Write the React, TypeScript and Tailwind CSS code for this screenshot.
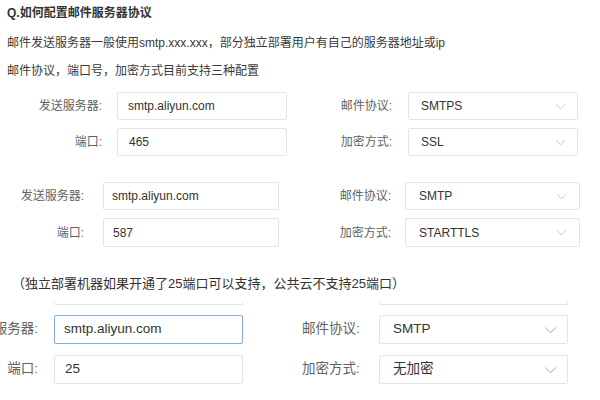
import React from 'react';

const font = { fontFamily: '"Liberation Sans", "Noto Sans CJK SC", sans-serif' };

const Chevron: React.FC<{ className?: string }> = ({ className }) => (
  <svg viewBox="0 0 12 7" className={className} fill="none" stroke="#c0c4cc" strokeWidth="1">
    <path d="M1 1l5 5 5-5" />
  </svg>
);

export default function App() {
  return (
    <div className="w-[600px] h-[400px] overflow-hidden bg-white text-[#333]" style={font}>
      {/* intro */}
      <div className="pl-[7px] h-[26px] leading-[26px] text-[12px] font-bold text-[#333]">
        Q.如何配置邮件服务器协议
      </div>
      <div className="pl-[7px] mt-[3px] h-[28px] leading-[28px] text-[12px] text-[#3a3a3a]">
        邮件发送服务器一般使用smtp.xxx.xxx，部分独立部署用户有自己的服务器地址或ip
      </div>
      <div className="pl-[7px] h-[29px] leading-[29px] text-[12px] text-[#3a3a3a]">
        邮件协议，端口号，加密方式目前支持三种配置
      </div>

      {/* SMTPS / SSL */}
      <div className="mt-[6px] flex flex-col gap-[8px] text-[12px]">
        <div className="flex items-center h-[28px]">
          <div className="w-[102px] text-right text-[#606266]">发送服务器:</div>
          <div className="ml-[15px] w-[170px] h-full border border-[#e2e4ea] rounded-[2px] pl-[10px] flex items-center text-[#333]">smtp.aliyun.com</div>
          <div className="w-[105px] text-right text-[#606266]">邮件协议:</div>
          <div className="ml-[16px] w-[170px] h-full border border-[#e2e4ea] rounded-[2px] pl-[12px] pr-[11px] flex items-center justify-between text-[#333]">
            SMTPS<Chevron className="w-[11px] h-[7px]" />
          </div>
        </div>
        <div className="flex items-center h-[28px]">
          <div className="w-[102px] text-right text-[#606266]">端口:</div>
          <div className="ml-[15px] w-[170px] h-full border border-[#e2e4ea] rounded-[2px] pl-[11px] flex items-center text-[#333]">465</div>
          <div className="w-[105px] text-right text-[#606266]">加密方式:</div>
          <div className="ml-[16px] w-[170px] h-full border border-[#e2e4ea] rounded-[2px] pl-[12px] pr-[11px] flex items-center justify-between text-[#333]">
            SSL<Chevron className="w-[11px] h-[7px]" />
          </div>
        </div>
      </div>

      {/* SMTP / STARTTLS */}
      <div className="mt-[26px] flex flex-col gap-[8px] text-[12px]">
        <div className="flex items-center h-[28px]">
          <div className="w-[84px] text-right text-[#606266]">发送服务器:</div>
          <div className="ml-[19px] w-[176px] h-full border border-[#e2e4ea] rounded-[2px] pl-[8px] flex items-center text-[#333]">smtp.aliyun.com</div>
          <div className="w-[112px] text-right text-[#606266]">邮件协议:</div>
          <div className="ml-[14px] w-[175px] h-full border border-[#e2e4ea] rounded-[2px] pl-[13px] pr-[12px] flex items-center justify-between text-[#333]">
            SMTP<Chevron className="w-[11px] h-[7px]" />
          </div>
        </div>
        <div className="flex items-center h-[29px]">
          <div className="w-[84px] text-right text-[#606266]">端口:</div>
          <div className="ml-[19px] w-[176px] h-full border border-[#e2e4ea] rounded-[2px] pl-[9px] flex items-center text-[#333]">587</div>
          <div className="w-[112px] text-right text-[#606266]">加密方式:</div>
          <div className="ml-[14px] w-[175px] h-full border border-[#e2e4ea] rounded-[2px] pl-[13px] pr-[12px] flex items-center justify-between text-[#333]">
            STARTTLS<Chevron className="w-[11px] h-[7px]" />
          </div>
        </div>
      </div>

      {/* note */}
      <div className="mt-[22px] pl-[12px] h-[30px] leading-[30px] text-[13px] text-[#333]">
        （独立部署机器如果开通了25端口可以支持，公共云不支持25端口）
      </div>

      {/* clipped row bottoms */}
      <div className="mt-[3px] flex h-[3px]">
        <div className="ml-[54px] w-[189px] border-b border-x border-[#e2e4ea] rounded-b-[2px]" />
        <div className="ml-[136px] w-[189px] border-b border-x border-[#e2e4ea] rounded-b-[2px]" />
      </div>

      {/* SMTP / none */}
      <div className="mt-[10px] flex flex-col gap-[11px] text-[13.5px]">
        <div className="flex items-center h-[29px]">
          <div className="w-[38px] shrink-0 flex justify-end whitespace-nowrap text-[#606266]"><span>发送服务器:</span></div>
          <div className="ml-[16px] w-[189px] h-full border border-[#87a9e3] rounded-[2px] pl-[9px] flex items-center text-[#333]">smtp.aliyun.com</div>
          <div className="w-[120px] pl-[59px] text-[#606266]">邮件协议:</div>
          <div className="ml-[16px] w-[189px] h-full border border-[#e2e4ea] rounded-[2px] pl-[13px] pr-[10px] flex items-center justify-between text-[#333]">
            SMTP<Chevron className="w-[13px] h-[8px]" />
          </div>
        </div>
        <div className="flex items-center h-[29px]">
          <div className="w-[38px] shrink-0 flex justify-end whitespace-nowrap text-[#606266]"><span>端口:</span></div>
          <div className="ml-[16px] w-[189px] h-full border border-[#e2e4ea] rounded-[2px] pl-[10px] flex items-center text-[#333]">25</div>
          <div className="w-[120px] pl-[59px] text-[#606266]">加密方式:</div>
          <div className="ml-[16px] w-[189px] h-full border border-[#e2e4ea] rounded-[2px] pl-[13px] pr-[10px] flex items-center justify-between text-[#333]">
            无加密<Chevron className="w-[13px] h-[8px]" />
          </div>
        </div>
      </div>
    </div>
  );
}
